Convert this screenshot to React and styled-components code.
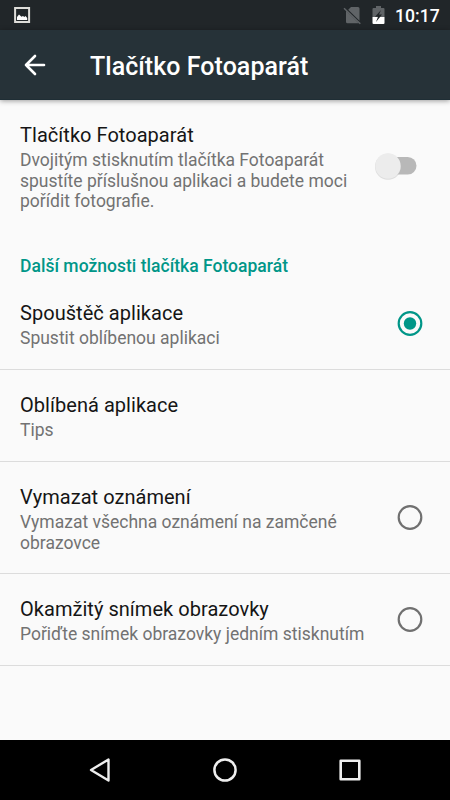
import React from 'react';
import styled, { createGlobalStyle } from 'styled-components';

const Global = createGlobalStyle`
  * { box-sizing: border-box; }
  body { margin: 0; background: #fafafa; font-family: Roboto, sans-serif; }
`;
const Screen = styled.div`
  width: 450px; height: 800px; display: flex; flex-direction: column; background: #fafafa; overflow: hidden;
`;
const StatusBar = styled.div`
  height: 30px; flex: none; background: #212629; display: flex; align-items: center; padding: 0 9px 0 13px; color: #fff;
`;
const StatusIcons = styled.div`
  margin-left: auto; display: flex; align-items: center; gap: 9px;
`;
const Clock = styled.span`
  font-size: 17.6px; font-weight: 500; line-height: 30px; width: 46px; padding-top: 2px; white-space: nowrap;
`;
const Toolbar = styled.header`
  height: 70px; flex: none; background: #263238; display: flex; align-items: center; padding-left: 20px; gap: 40px; color: #fff;
  border-bottom: 1px solid #1f2e35;
  box-shadow: 0 1px 5px rgba(0,0,0,.38);
`;
const Title = styled.h1`
  margin: 0; padding-top: 4px; font-size: 25px; font-weight: 500; line-height: 30px; letter-spacing: .04px; white-space: nowrap;
`;
const Main = styled.main`
  flex: 1; min-height: 0;
`;
const Row = styled.div`
  height: ${p => p.$h}px; padding: 0 27px 0 20px; display: flex; align-items: center; justify-content: space-between;
  border-bottom: ${p => (p.$line ? '1px solid #dcdcdc' : 'none')};
`;
const Name = styled.div`
  padding-top: 3px; font-size: 20px; line-height: 24px; letter-spacing: .04px; color: #151515; white-space: nowrap;
`;
const Summary = styled.div`
  padding-top: 3px; font-size: 17.5px; line-height: 20.6px; color: #727272; white-space: pre;
`;
const Category = styled.h2`
  margin: 0; height: 46px; padding: 22px 20px 0; font-size: 17.5px; font-weight: 500; line-height: 24px; letter-spacing: .02px; color: #009688;
`;
const NavBar = styled.nav`
  height: 60px; flex: none; background: #000; display: flex; align-items: center; justify-content: space-between; padding: 0 88px;
`;

const Radio = ({ on }) => (
  <svg width="26" height="26" viewBox="0 0 26 26">
    <circle cx="13" cy="12.5" r="11.3" fill="none" stroke={on ? '#009688' : '#707070'} strokeWidth="2.2" />
    {on && <circle cx="13" cy="12.5" r="6.2" fill="#009688" />}
  </svg>
);

const Item = ({ h, line, name, summary, children }) => (
  <Row $h={h} $line={line}>
    <div><Name>{name}</Name><Summary>{summary}</Summary></div>
    {children}
  </Row>
);

export default function App() {
  return (
    <Screen>
      <Global />
      <StatusBar>
        <svg width="18" height="18" viewBox="0 0 18 18">
          <rect x="2.1" y="2" width="14" height="14" fill="none" stroke="#deddd9" strokeWidth="2" />
          <path fill="#fff" d="M4 14v-3l2-2.5 2.5 2.2 1.5-.8 1.3 1 1.2-1 1.7 2V14z" />
        </svg>
        <StatusIcons>
          <svg width="19" height="20" viewBox="0 0 19 20">
            <path fill="#606467" d="M8 2h7q1.500 0 1.500 1.500v12.300L5.200 4.700zM3 5.800l12.800 12.400H4.500Q3 18.200 3 16.700z" />
            <path d="M1 3.200l16.300 15.600" stroke="#606467" strokeWidth="1.500" />
          </svg>
          <svg width="15" height="20" viewBox="0 0 15 20">
            <path fill="#606467" d="M5 1h5v2h2.500q1 0 1 1v8h-12V4q0-1 1-1H5z" />
            <path fill="#fff" d="M1.500 12h12v6q0 1-1 1h-10q-1 0-1-1z" />
            <path fill="#212629" d="M10 5L4 11.800h3L5 17l6-7.500H8z" />
          </svg>
          <Clock>10:17</Clock>
        </StatusIcons>
      </StatusBar>
      <Toolbar>
        <svg width="30" height="30" viewBox="0 0 24 24"><path fill="none" stroke="#fff" strokeWidth="2.1" strokeLinecap="round" strokeLinejoin="round" d="M12 4.800L4.800 12l7.200 7.200M4.800 12H19.200" /></svg>
        <Title>Tlačítko Fotoaparát</Title>
      </Toolbar>
      <Main>
        <Item h={132} name="Tlačítko Fotoaparát" summary={'Dvojitým stisknutím tlačítka Fotoaparát\nspustíte příslušnou aplikaci a budete moci\npořídit fotografie.'}>
          <svg width="50" height="36" viewBox="0 0 50 36">
            <rect x="9" y="9" width="34.500" height="17.500" rx="8.750" fill="#b8b8b8" />
            <circle cx="15" cy="18.800" r="13" fill="#c4c4c4" opacity=".55" />
            <circle cx="15" cy="18" r="12.700" fill="#ececec" />
          </svg>
        </Item>
        <Category>Další možnosti tlačítka Fotoaparát</Category>
        <Item h={92} line name="Spouštěč aplikace" summary="Spustit oblíbenou aplikaci"><Radio on /></Item>
        <Item h={92} line name="Oblíbená aplikace" summary="Tips" />
        <Item h={112} line name="Vymazat oznámení" summary={'Vymazat všechna oznámení na zamčené\nobrazovce'}><Radio /></Item>
        <Item h={92} line name="Okamžitý snímek obrazovky" summary="Pořiďte snímek obrazovky jedním stisknutím"><Radio /></Item>
      </Main>
      <NavBar>
        <svg width="24" height="26" viewBox="0 0 24 26"><path d="M20.500 2.500v21L3 13z" fill="none" stroke="#eee" strokeWidth="2.400" strokeLinejoin="round" /></svg>
        <svg width="26" height="26" viewBox="0 0 26 26"><circle cx="13" cy="13" r="10.600" fill="none" stroke="#eee" strokeWidth="2.500" /></svg>
        <svg width="24" height="24" viewBox="0 0 24 24"><rect x="2.700" y="2.700" width="18.600" height="18.600" fill="none" stroke="#eee" strokeWidth="2.600" strokeLinejoin="round" /></svg>
      </NavBar>
    </Screen>
  );
}
